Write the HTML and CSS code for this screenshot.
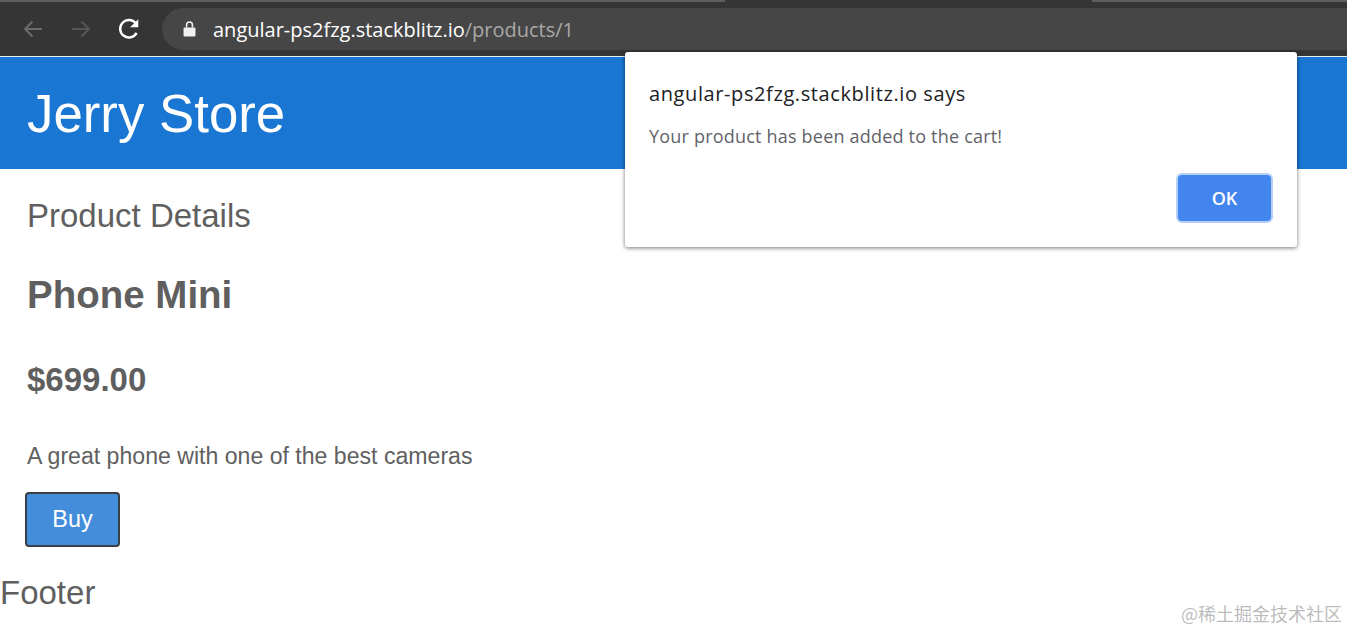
FILE: index.html
```html
<!DOCTYPE html>
<html lang="en">
<head>
    <meta charset="UTF-8">
    <meta name="viewport" content="width=device-width, initial-scale=1.0">
    <title>Jerry Store</title>
    <link rel="stylesheet" href="styles.css">
</head>
<body>
    <div class="browser-bar">
        <div class="tab-strip">
            <span class="tab-edge tab-left"></span>
            <span class="tab-edge tab-right"></span>
        </div>
        <div class="toolbar">
            <div class="nav-icons">
                <svg class="nav-icon" width="24" height="24" viewBox="0 0 24 24" fill="none" stroke="#6b6b6b" stroke-width="2"><path d="M21 12H4M11.500 4.500L4 12l7.500 7.500"/></svg>
                <svg class="nav-icon" width="24" height="24" viewBox="0 0 24 24" fill="none" stroke="#565656" stroke-width="2"><path d="M3 12h17M12.500 4.500L20 12l-7.500 7.500"/></svg>
                <svg class="nav-icon" width="24" height="24" viewBox="1 1 22 22" fill="none" stroke="#fff" stroke-width="2.200"><path d="M19 15.500A8 8 0 1 1 18.200 6.800"/><path d="M20.500 3v7.500H13z" fill="#fff" stroke="none"/></svg>
            </div>
            <div class="address-bar">
                <svg class="lock" width="13" height="18" viewBox="0 0 12 16"><path d="M1.500 6.500h9a1 1 0 0 1 1 1v6.500a1 1 0 0 1-1 1h-9a1 1 0 0 1-1-1V7.500a1 1 0 0 1 1-1z" fill="#f1f1f1"/><path d="M3.300 6.500V4.200a2.700 2.700 0 0 1 5.400 0v2.300" fill="none" stroke="#f1f1f1" stroke-width="1.400"/></svg>
                <span class="url"><span class="url-host">angular-ps2fzg.stackblitz.io</span><span class="url-path">/products/1</span></span>
            </div>
        </div>
    </div>

    <header class="store-header">
        <h1>Jerry Store</h1>
    </header>

    <main class="product">
        <h2 class="page-title">Product Details</h2>
        <h3 class="product-name">Phone Mini</h3>
        <h4 class="product-price">$699.00</h4>
        <p class="product-desc">A great phone with one of the best cameras</p>
        <button class="buy-btn" type="button">Buy</button>
    </main>

    <footer class="store-footer">Footer</footer>

    <div class="alert-box">
        <div class="alert-title">angular-ps2fzg.stackblitz.io says</div>
        <div class="alert-msg">Your product has been added to the cart!</div>
        <div class="alert-actions">
            <button class="ok-btn" type="button">OK</button>
        </div>
    </div>

    <div class="watermark">@稀土掘金技术社区</div>
</body>
</html>
```

FILE: styles.css
```css
html, body {
    height: 632px;
    overflow: hidden;
}
body {
    font-family: "Liberation Sans", Arial, sans-serif;
    color: #5f5f5f;
    background: white;
    margin: 0;
}
.browser-bar {
    height: 56px;
    background: #353535;
    border-bottom: 1px solid #e8eef5;
}
.tab-strip {
    display: flex;
    justify-content: space-between;
    height: 8px;
}
.tab-edge {
    height: 2px;
    background: #5e5e5e;
}
.tab-left {
    width: 725px;
}
.tab-right {
    width: 255px;
}
.toolbar {
    display: flex;
    align-items: center;
    height: 42px;
}
.nav-icons {
    display: flex;
    gap: 24px;
    width: 162px;
    padding-left: 21px;
    box-sizing: border-box;
}
.address-bar {
    flex: 1;
    height: 42px;
    display: flex;
    align-items: center;
    background: #464646;
    border-radius: 21px 0 0 21px;
    padding-left: 21px;
}
.lock {
    margin-right: 17px;
}
.url {
    font-family: "Open Sans", sans-serif;
    font-size: 20px;
}
.url-host {
    color: white;
}
.url-path {
    color: #a9a9a9;
}
.store-header {
    height: 112px;
    background: #1976d2;
    display: flex;
    align-items: center;
    padding-left: 27px;
}
h1 {
    margin: 0;
    color: white;
    font-size: 52.800px;
    font-weight: normal;
}
.product {
    padding: 28px 27px 0;
}
.page-title {
    margin: 0;
    font-size: 33px;
    line-height: 38px;
    font-weight: normal;
}
.product-name {
    margin: 39px 0 0;
    font-size: 38.500px;
    line-height: 42px;
    font-weight: bold;
}
.product-price {
    margin: 45px 0 0;
    font-size: 33px;
    line-height: 38px;
    font-weight: bold;
}
.product-desc {
    margin: 44px 0 0;
    font-size: 23.100px;
    line-height: 27px;
}
.buy-btn {
    display: block;
    margin-top: 22px;
    margin-left: -2px;
    width: 95px;
    height: 55px;
    background: #438ddb;
    color: white;
    border: 2px solid #3a3f45;
    border-radius: 4px;
    font-family: "Liberation Sans", Arial, sans-serif;
    font-size: 23.400px;
}
.store-footer {
    margin-top: 27px;
    font-size: 33px;
    line-height: 38px;
}
.alert-box {
    position: absolute;
    left: 625px;
    top: 52px;
    width: 672px;
    height: 195px;
    box-sizing: border-box;
    padding: 28px 24px 0;
    background: white;
    border-radius: 3px;
    box-shadow: 0 1px 4px rgba(0, 0, 0, 0.55);
    font-family: "Open Sans", sans-serif;
}
.alert-title {
    font-size: 20px;
    line-height: 28px;
    letter-spacing: 0.6px;
    color: #202124;
}
.alert-msg {
    margin-top: 16px;
    font-size: 18px;
    line-height: 24px;
    letter-spacing: 0.2px;
    color: #5f6368;
}
.alert-actions {
    display: flex;
    justify-content: flex-end;
    margin-top: 25px;
}
.ok-btn {
    width: 97px;
    height: 50px;
    background: #4285ee;
    color: white;
    border: 2px solid #b4d0f6;
    border-radius: 6px;
    font-family: "Open Sans", sans-serif;
    font-size: 18px;
    font-weight: 600;
}
.watermark {
    position: absolute;
    right: 5px;
    top: 601px;
    font-family: "Noto Sans CJK SC", sans-serif;
    font-size: 18px;
    line-height: 24px;
    color: rgba(120, 120, 120, 0.5);
}
```
